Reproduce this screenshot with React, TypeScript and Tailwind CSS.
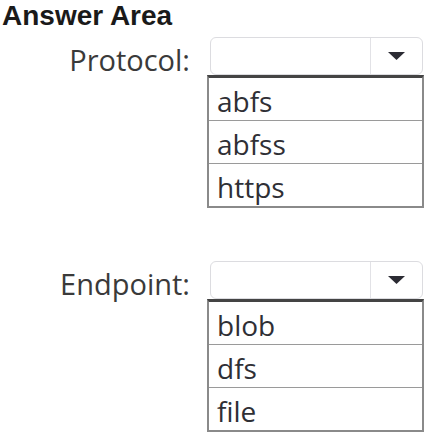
import React from 'react';

const fieldFont = { fontFamily: '"Open Sans", "Noto Sans", sans-serif' };
const headFont = { fontFamily: '"Liberation Sans", Arial, sans-serif' };

type Group = { label: string; options: string[] };

const groups: Group[] = [
  { label: 'Protocol:', options: ['abfs', 'abfss', 'https'] },
  { label: 'Endpoint:', options: ['blob', 'dfs', 'file'] },
];

const Dropdown: React.FC<Group> = ({ label, options }) => (
  <div className="flex flex-col">
    <div className="flex items-center">
      <div className="w-[191px] pt-[6px] pr-[1px] text-right text-[29px] leading-none text-[#3a3a3a]">{label}</div>
      <div className="ml-[19px] flex h-[38px] w-[213px] rounded-[6px] border border-[#dcdce0] bg-white">
        <div className="flex-1 border-r border-[#e2e2e6]" />
        <div className="flex w-[51px] items-center justify-center">
          <svg width="17" height="8" viewBox="0 0 17 8">
            <path d="M0 0 H17 L8.5 8 Z" fill="#2b2b33" />
          </svg>
        </div>
      </div>
    </div>
    <div className="ml-[207px] w-[217px] border-2 border-[#8a8a8a] border-t-[3px] border-t-[#444]">
      {options.map((opt, i) => (
        <div
          key={opt}
          className={`flex h-[42px] items-center pl-[8px] pt-[4px] text-[28px] leading-none text-[#2f2f35] ${
            i > 0 ? 'h-[43px] border-t border-[#9a9a9a]' : ''
          }`}
        >
          {opt}
        </div>
      ))}
    </div>
  </div>
);

export default function App() {
  return (
    <div className="h-[435px] w-[426px] overflow-hidden bg-white" style={fieldFont}>
      <div className="pl-[2px] text-[28px] font-bold leading-[32px] text-[#1a1a1a]" style={headFont}>
        Answer Area
      </div>
      <div className="mt-[5px] flex flex-col gap-[53px]">
        {groups.map((g) => (
          <Dropdown key={g.label} {...g} />
        ))}
      </div>
    </div>
  );
}
